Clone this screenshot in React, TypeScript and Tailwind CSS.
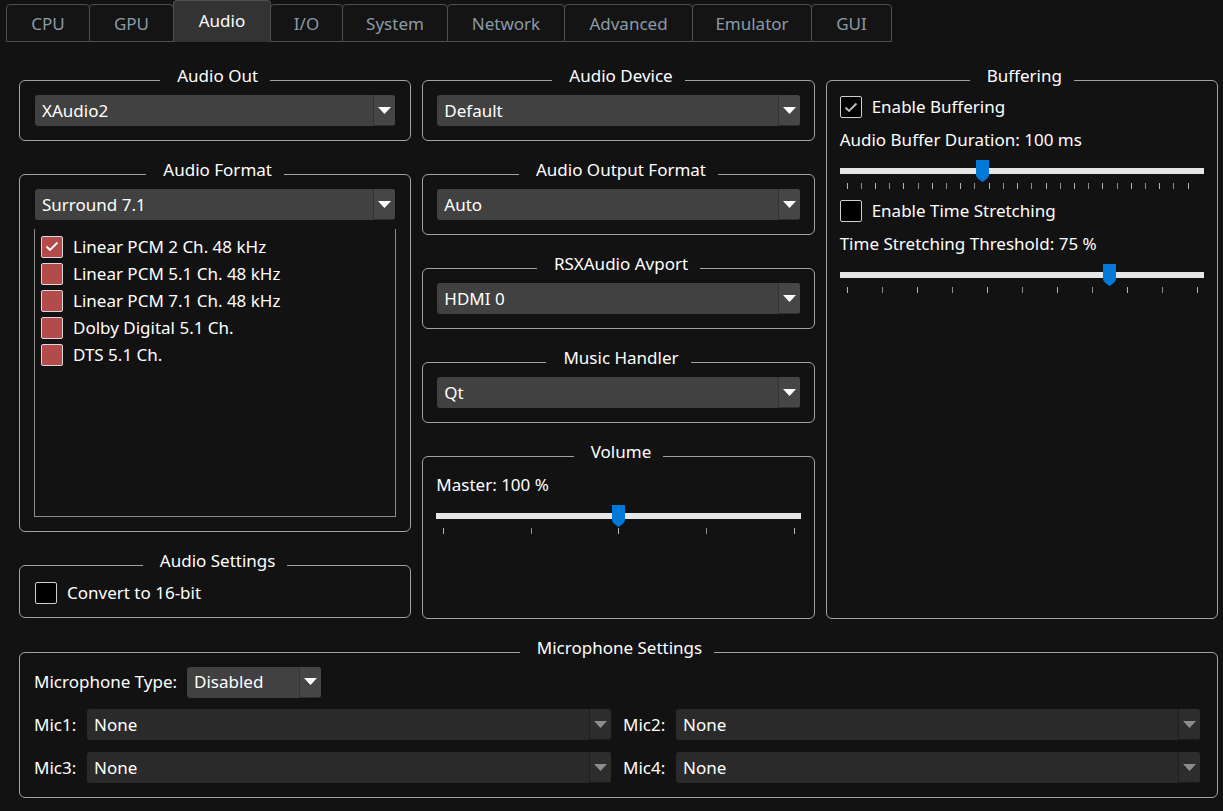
import type { ReactNode } from 'react';

const tabs = [
  { name: 'CPU', w: 84 },
  { name: 'GPU', w: 85 },
  { name: 'Audio', w: 98 },
  { name: 'I/O', w: 73 },
  { name: 'System', w: 106 },
  { name: 'Network', w: 118 },
  { name: 'Advanced', w: 129 },
  { name: 'Emulator', w: 120 },
  { name: 'GUI', w: 81 },
];

function Group({ title, className = '', children }: { title: string; className?: string; children?: ReactNode }) {
  return (
    <fieldset className={`border border-[#a3a3a3] rounded-[6px] min-w-0 ${className}`}>
      <legend className="mx-auto pl-[17px] pr-[12px] pb-[8px] leading-[20px] text-white">{title}</legend>
      {children}
    </fieldset>
  );
}

function Arrow({ color }: { color: string }) {
  return (
    <svg width="13" height="7" viewBox="0 0 13 7">
      <path d="M0 0H13L6.5 7Z" fill={color} />
    </svg>
  );
}

function Combo({ value, disabled = false, className = '' }: { value: string; disabled?: boolean; className?: string }) {
  return (
    <div className={`flex h-[31px] rounded-[3px] ${disabled ? 'bg-[#2a2a2a]' : 'bg-[#414141]'} ${className}`}>
      <div className="flex-1 flex items-center pl-[7px] text-white truncate">{value}</div>
      <div
        className={`w-[22px] flex items-center justify-center border-l rounded-r-[3px] ${
          disabled ? 'bg-[#2d2d2d] border-[#1e1e1e] border-b border-b-[#1a1a1a]' : 'bg-[#464646] border-[#333] border-b border-b-[#2e2e2e]'
        }`}
      >
        <Arrow color={disabled ? '#8c8c8c' : '#ffffff'} />
      </div>
    </div>
  );
}

function Check({ checked = false, red = false }: { checked?: boolean; red?: boolean }) {
  return (
    <div
      className={`w-[22px] h-[22px] shrink-0 border rounded-[2px] flex items-center justify-center ${
        red ? 'bg-[#b34b4b] border-[#d8d8d8]' : 'bg-black border-[#cfcfcf]'
      }`}
    >
      {checked && (
        <svg width="14" height="11" viewBox="0 0 14 11">
          <path d="M1.5 5.5L5 9L12.5 1.5" fill="none" stroke={red ? '#ffffff' : '#bdbdbd'} strokeWidth="1.8" />
        </svg>
      )}
    </div>
  );
}

function Slider({ value, ticks }: { value: number; ticks: number[] }) {
  return (
    <div>
      <div className="relative h-[22px]">
        <div className="absolute left-0 right-0 top-[8px] h-[6px] bg-[#e6e6e6]" />
        <svg
          className="absolute top-0"
          style={{ left: `calc(7px + (100% - 14px) * ${value} - 6.5px)` }}
          width="13"
          height="22"
          viewBox="0 0 13 22"
        >
          <path d="M0 0H13V15Q13 18 6.5 22Q0 18 0 15Z" fill="#0078d7" />
        </svg>
      </div>
      <div className="relative h-[6px] mt-[1px]">
        {ticks.map((t, i) => (
          <div
            key={i}
            className={`absolute top-0 w-px h-[6px] ${i % 2 === 0 ? 'bg-[#b8b8ac]' : 'bg-[#8e8e8e]'}`}
            style={{ left: `calc(7px + (100% - 14px) * ${t})` }}
          />
        ))}
      </div>
    </div>
  );
}

const bufTicks = Array.from({ length: 25 }, (_, i) => (i * 14.15) / 349);
const tenTicks = Array.from({ length: 11 }, (_, i) => i / 10);
const fiveTicks = [0, 0.25, 0.5, 0.75, 1];

const formats = [
  { label: 'Linear PCM 2 Ch. 48 kHz', checked: true },
  { label: 'Linear PCM 5.1 Ch. 48 kHz', checked: false },
  { label: 'Linear PCM 7.1 Ch. 48 kHz', checked: false },
  { label: 'Dolby Digital 5.1 Ch.', checked: false },
  { label: 'DTS 5.1 Ch.', checked: false },
];

export default function App() {
  return (
    <div className="w-[1223px] h-[811px] bg-[#121212] text-white text-[17px] font-['Noto_Sans','Open_Sans',sans-serif] overflow-hidden">
      <div className="flex items-end h-[42px] pl-[6px]">
        {tabs.map((t, i) => {
          const sel = t.name === 'Audio';
          return (
            <div
              key={t.name}
              style={{ width: t.w }}
              className={`flex items-center justify-center rounded-t-[4px] border border-[#4f4f4f] ${i > 0 ? '-ml-px' : ''} ${
                sel ? 'h-[42px] bg-[#333333] border-b-0 text-white pb-[2px] relative z-10' : 'h-[38px] bg-[#141414] text-[#8b9ba6] pt-[1px]'
              }`}
            >
              {t.name}
            </div>
          );
        })}
      </div>

      <div className="pl-[19px] pr-[5px] pt-[24px]">
        <div className="grid grid-cols-3 gap-x-[11px]">
          {/* column 1 */}
          <div className="flex flex-col gap-[19px]">
            <Group title="Audio Out" className="h-[75px] px-[15px]">
              <Combo value="XAudio2" className="mt-[1px]" />
            </Group>
            <Group title="Audio Format" className="h-[372px] px-[14px]">
              <Combo value="Surround 7.1" className="mt-[1px] ml-px mr-px" />
              <div className="mt-[9px] h-[288px] border border-t-0 border-[#8c8c8c] pt-[4px] pl-[6px]">
                {formats.map(f => (
                  <div key={f.label} className="flex items-center gap-[10px] h-[27px]">
                    <Check red checked={f.checked} />
                    <span>{f.label}</span>
                  </div>
                ))}
              </div>
            </Group>
            <Group title="Audio Settings" className="h-[67px] px-[15px]">
              <div className="flex items-center gap-[10px] mt-[3px] h-[22px]">
                <Check />
                <span>Convert to 16-bit</span>
              </div>
            </Group>
          </div>

          {/* column 2 */}
          <div className="flex flex-col gap-[19px]">
            <Group title="Audio Device" className="h-[75px] px-[14px]">
              <Combo value="Default" className="mt-[1px]" />
            </Group>
            <Group title="Audio Output Format" className="h-[75px] px-[14px]">
              <Combo value="Auto" className="mt-[1px]" />
            </Group>
            <Group title="RSXAudio Avport" className="h-[75px] px-[14px]">
              <Combo value="HDMI 0" className="mt-[1px]" />
            </Group>
            <Group title="Music Handler" className="h-[75px] px-[14px]">
              <Combo value="Qt" className="mt-[1px]" />
            </Group>
            <Group title="Volume" className="h-[177px] px-[13px]">
              <div className="mt-[4px] leading-[22px]">Master: 100 %</div>
              <div className="mt-[9px]">
                <Slider value={0.5} ticks={fiveTicks} />
              </div>
            </Group>
          </div>

          {/* column 3 */}
          <div className="flex flex-col">
            <Group title="Buffering" className="h-[553px] px-[13px]">
              <div className="flex items-center gap-[10px] mt-[2px] h-[22px]">
                <Check checked />
                <span>Enable Buffering</span>
              </div>
              <div className="mt-[11px] leading-[22px]">Audio Buffer Duration: 100 ms</div>
              <div className="mt-[9px]">
                <Slider value={0.388} ticks={bufTicks} />
              </div>
              <div className="flex items-center gap-[10px] mt-[11px] h-[22px]">
                <Check />
                <span>Enable Time Stretching</span>
              </div>
              <div className="mt-[11px] leading-[22px]">Time Stretching Threshold: 75 %</div>
              <div className="mt-[9px]">
                <Slider value={0.75} ticks={tenTicks} />
              </div>
            </Group>
          </div>
        </div>

        <Group title="Microphone Settings" className="mt-[19px] h-[160px] pl-[14px] pr-[17px]">
          <div className="flex items-center mt-[1px] h-[30px]">
            <span className="w-[153px]">Microphone Type:</span>
            <Combo value="Disabled" className="w-[134px] h-[30px]" />
          </div>
          <div className="grid grid-cols-2 gap-x-[12px] gap-y-[12px] mt-[12px]">
            {['Mic1:', 'Mic2:', 'Mic3:', 'Mic4:'].map(m => (
              <div key={m} className="flex items-center">
                <span className="w-[53px] shrink-0">{m}</span>
                <Combo value="None" disabled className="flex-1 h-[30px]" />
              </div>
            ))}
          </div>
        </Group>
      </div>
    </div>
  );
}
